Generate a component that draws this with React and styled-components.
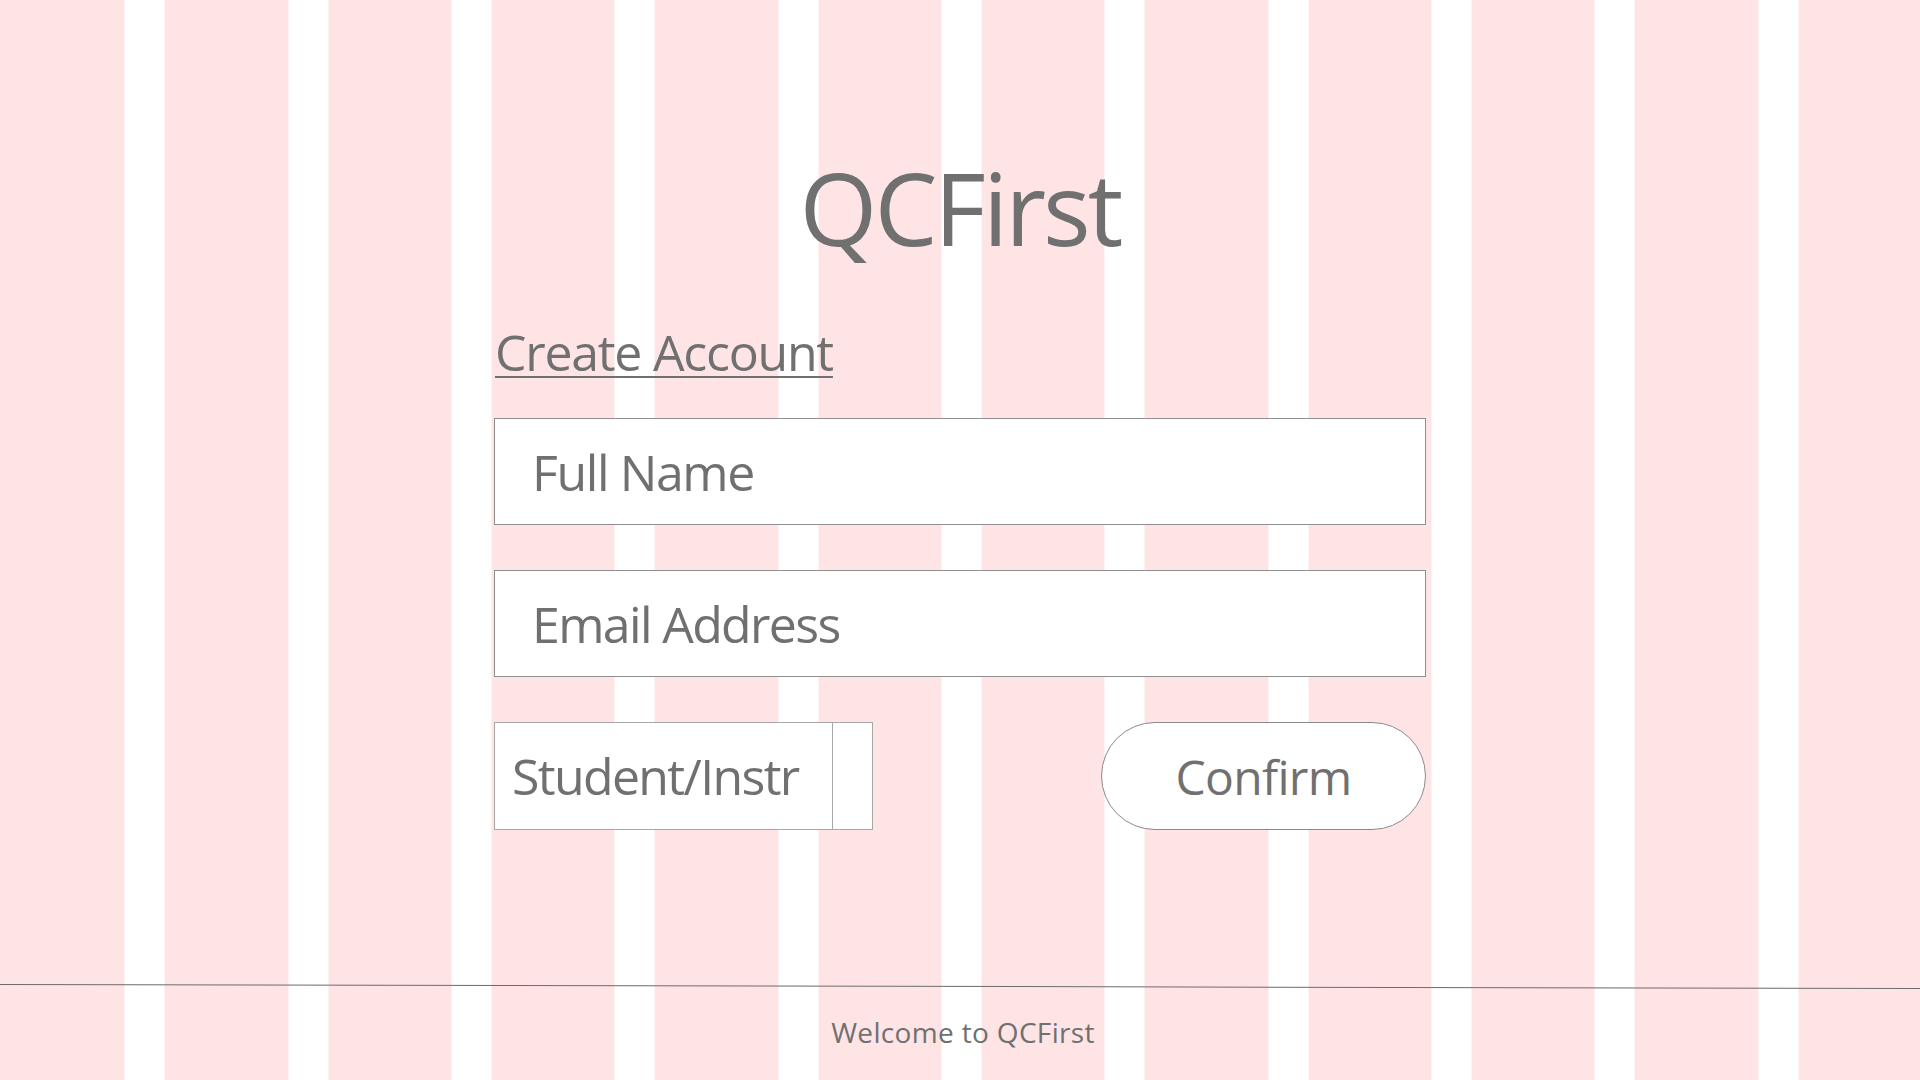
import React from "react";
import styled, { createGlobalStyle } from "styled-components";

const GRAY = "#707070";
const PINK = "#ffe4e6";

const GlobalStyle = createGlobalStyle`
  html, body {
    margin: 0;
    padding: 0;
  }
  body {
    font-family: "Open Sans", "Noto Sans", sans-serif;
    color: ${GRAY};
    background-color: #ffffff;
    background-image: repeating-linear-gradient(
      to right,
      ${PINK} 0px,
      ${PINK} 123.33px,
      #ffffff 123.33px,
      #ffffff 163.33px
    );
    background-position: 1.5px 0;
  }
  * { box-sizing: border-box; }
`;

const Page = styled.div`
  min-height: 100vh;
  display: flex;
  flex-direction: column;
`;

const Main = styled.main`
  flex: 1;
  display: flex;
  flex-direction: column;
  align-items: center;
`;

const Title = styled.h1`
  margin: 157px 0 0;
  font-weight: 400;
  font-size: 100px;
  line-height: 1;
  letter-spacing: -0.03em;
  color: ${GRAY};
`;

const Form = styled.form`
  width: 932px;
  margin-top: 70px;
  display: flex;
  flex-direction: column;
`;

const CreateLink = styled.a`
  align-self: flex-start;
  margin-left: 1px;
  font-size: 50px;
  line-height: 1;
  letter-spacing: -0.025em;
  color: ${GRAY};
  text-decoration: underline;
  text-decoration-thickness: 2px;
  text-underline-offset: 5px;
  cursor: pointer;
`;

const Field = styled.input`
  display: block;
  width: 100%;
  height: 107px;
  margin: ${(p) => p.$gap}px 0 0;
  padding: 0 0 0 37px;
  border: 1.5px solid #8f8f8f;
  border-radius: 0;
  background: #ffffff;
  font-family: inherit;
  font-size: 50px;
  letter-spacing: ${(p) => p.$spacing}em;
  color: ${GRAY};
  outline: none;

  &::placeholder {
    color: ${GRAY};
    opacity: 1;
  }
`;

const ActionRow = styled.div`
  margin-top: 45px;
  display: flex;
  justify-content: space-between;
  align-items: stretch;
  height: 108px;
`;

const RoleSelect = styled.div`
  width: 379px;
  display: flex;
  border: 1px solid #a8a8a8;
  background: #ffffff;
  cursor: pointer;
`;

const RoleLabel = styled.span`
  flex: 1;
  display: flex;
  align-items: center;
  padding-left: 17px;
  font-size: 50px;
  letter-spacing: -0.033em;
  white-space: nowrap;
  overflow: hidden;
`;

const RoleArrow = styled.span`
  width: 40px;
  border-left: 1px solid #a8a8a8;
`;

const ConfirmButton = styled.button`
  width: 325px;
  border: 1px solid #8a8a8a;
  border-radius: 54px;
  background: #ffffff;
  font-family: inherit;
  font-size: 48px;
  letter-spacing: -0.015em;
  color: ${GRAY};
  padding: 0;
  cursor: pointer;
`;

const Footer = styled.footer`
  display: flex;
  flex-direction: column;
  align-items: center;
`;

const Divider = styled.hr`
  width: 100%;
  margin: 0;
  border: 0;
  border-top: 1.5px solid #6c6c6c;
  transform: rotate(0.12deg);
`;

const FooterText = styled.p`
  margin: 31px 0 34px;
  padding-left: 6px;
  font-size: 28px;
  line-height: 1;
  letter-spacing: 0.012em;
  color: ${GRAY};
`;

export default function App() {
  return (
    <>
      <GlobalStyle />
      <Page>
        <Main>
          <Title>QCFirst</Title>
          <Form onSubmit={(e) => e.preventDefault()}>
            <CreateLink>Create Account</CreateLink>
            <Field $gap={41} $spacing={-0.028} type="text" placeholder="Full Name" />
            <Field $gap={45} $spacing={-0.033} type="email" placeholder="Email Address" />
            <ActionRow>
              <RoleSelect>
                <RoleLabel>Student/Instr</RoleLabel>
                <RoleArrow />
              </RoleSelect>
              <ConfirmButton type="submit">Confirm</ConfirmButton>
            </ActionRow>
          </Form>
        </Main>
        <Footer>
          <Divider />
          <FooterText>Welcome to QCFirst</FooterText>
        </Footer>
      </Page>
    </>
  );
}
